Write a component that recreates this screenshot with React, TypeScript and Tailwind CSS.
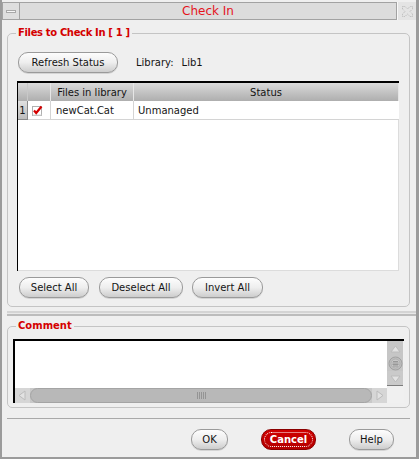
import React from "react";

const Btn: React.FC<{ w: string; children: React.ReactNode; className?: string }> = ({ w, children, className = "" }) => (
    <div
        className={`${w} h-[21px] shrink-0 rounded-[10px] border border-[#9a9a9a] bg-linear-to-b from-[#fdfdfd] via-[#eeeeee] to-[#cdcdcd] shadow-[0_1px_0_#d4d4d4] flex items-center justify-center text-[10px] text-[#141414] ${className}`}
    >
        {children}
    </div>
);

const Legend: React.FC<{ children: React.ReactNode; className?: string }> = ({ children, className = "" }) => (
    <legend className={`px-[2px] text-[10px] leading-[12px] font-bold text-[#d40000] ${className}`}>{children}</legend>
);

const Arrow: React.FC<{ dir: "up" | "down" | "left" | "right" }> = ({ dir }) => {
    const pts = {
        up: "3,11 7.5,5 12,11",
        down: "3,5 7.5,11 12,5",
        left: "10,3 4,7.5 10,12",
        right: "5,3 11,7.5 5,12",
    }[dir];
    return (
        <svg width="15" height="15" viewBox="0 0 15 15">
            <polygon points={pts} fill="#e2e2e2" stroke="#bcbcbc" strokeWidth="1" />
        </svg>
    );
};

export default function App() {
    return (
        <div className="w-[419px] h-[459px] bg-[#efefef] border-l-2 border-r-[3px] border-b-2 border-[#9b9b9b] pt-[2px] flex flex-col font-['DejaVu_Sans',sans-serif] text-[10px] text-[#141414] overflow-hidden">
            {/* title bar */}
            <div className="flex h-[18px] shrink-0">
                <div className="w-[18px] border border-[#a2a2a2] bg-[#dedede] flex items-center justify-center">
                    <div className="w-[10px] h-[3px] border border-[#a8a8a8] bg-[#f6f6f6]" />
                </div>
                <div className="flex-1 border-y border-r border-[#a2a2a2] bg-[#dcdcdc] flex items-center justify-center text-[12px] text-[#e4141c]">
                    Check In
                </div>
                <div className="w-[19px] border-l border-[#f8f8f8] bg-[#e4e4e4] flex items-center justify-center">
                    <svg width="13" height="13" viewBox="0 0 13 13">
                        <path
                            d="M1.5 1.5 L4 1.5 L6.5 4 L9 1.5 L11.5 1.5 L11.5 4 L9 6.5 L11.5 9 L11.5 11.5 L9 11.5 L6.5 9 L4 11.5 L1.5 11.5 L1.5 9 L4 6.5 L1.5 4 Z"
                            fill="none"
                            stroke="#b4b4b4"
                            strokeWidth="1"
                            strokeDasharray="1 1"
                        />
                    </svg>
                </div>
            </div>

            <div className="flex flex-col pl-[5px] pr-[6px]">
                {/* files group */}
                <fieldset className="mt-[7px] border border-[#c4c4c4] rounded-[5px] pl-[9px] pr-[10px] pt-[13px] pb-[8px]">
                    <Legend className="ml-[-1px] tracking-[-0.35px]">Files to Check In [ 1 ]</Legend>
                    <div className="flex items-center">
                        <Btn w="w-[100px] ml-[1px]">Refresh Status</Btn>
                        <span className="ml-[18px]">Library:</span>
                        <span className="ml-[8px]">Lib1</span>
                    </div>

                    <div className="mt-[8px] w-[382px] h-[190px] bg-white border-t-2 border-l border-black flex flex-col">
                        <div className="flex h-[18px] bg-linear-to-b from-[#dadada] to-[#aeaeae]">
                            <div className="w-[10px] border-r border-[#c8c8c8]" />
                            <div className="w-[23px] border-r border-[#e6e6e6]" />
                            <div className="w-[83px] border-r border-[#e6e6e6] flex items-center justify-center">Files in library</div>
                            <div className="flex-1 border-r border-[#e6e6e6] flex items-center justify-center">Status</div>
                        </div>
                        <div className="flex h-[19px]">
                            <div className="w-[10px] bg-linear-to-b from-[#e0e0e0] to-[#bdbdbd] border-r border-b border-[#8a8a8a] flex items-center justify-center">
                                1
                            </div>
                            <div className="w-[23px] border-r border-b border-[#d4d4d4] flex items-center pl-[3px]">
                                <svg width="12" height="12" viewBox="0 0 12 12">
                                    <rect x="1.5" y="2.5" width="9" height="9" fill="#ffffff" stroke="#b0b0b0" />
                                    <line x1="2" y1="11" x2="10.5" y2="11" stroke="#d8d8d8" />
                                    <path d="M3 6.5 L5.2 9 L10.5 2.5" fill="none" stroke="#d40000" strokeWidth="2.2" />
                                </svg>
                            </div>
                            <div className="w-[83px] border-r border-b border-[#d4d4d4] flex items-center pl-[5px]">newCat.Cat</div>
                            <div className="flex-1 border-b border-[#d4d4d4] flex items-center pl-[4px]">Unmanaged</div>
                        </div>
                        <div className="flex-1 border-r border-b border-[#dcdcdc]" />
                    </div>

                    <div className="mt-[6px] ml-[2px] flex">
                        <Btn w="w-[70px]">Select All</Btn>
                        <Btn w="w-[84px] ml-[10px]">Deselect All</Btn>
                        <Btn w="w-[71px] ml-[9px]">Invert All</Btn>
                    </div>
                </fieldset>

                {/* splitter */}
                <div className="mt-[4px] mr-[-6px] h-[5px] border-t-2 border-b-2 border-t-[#d4d4d4] border-b-[#bcbcbc] bg-[#e8e8e8]" />

                {/* comment group */}
                <fieldset className="mt-[4px] border border-[#c4c4c4] rounded-[5px] pl-[5px] pr-[5px] pt-[7px] pb-[4px]">
                    <Legend className="ml-[3px]">Comment</Legend>
                    <div className="h-[64px] border-t-2 border-l-2 border-black bg-[#f0f0f0] flex flex-col">
                        <div className="flex h-[47px]">
                            <div className="flex-1 bg-white" />
                            <div className="w-[16px] flex flex-col">
                                <div className="h-[15px] bg-[#c6c6c6] flex items-center justify-center">
                                    <Arrow dir="up" />
                                </div>
                                <div className="h-[15px] bg-[#c6c6c6] flex items-center justify-center">
                                    <svg width="15" height="15" viewBox="0 0 15 15">
                                        <circle cx="7.5" cy="7.5" r="6.5" fill="#bdbdbd" stroke="#a2a2a2" />
                                        <circle cx="7.5" cy="7.5" r="4.5" fill="#c8c8c8" stroke="#b0b0b0" />
                                        <path d="M5 5.5 H10 M4.5 7 H10.5 M4.5 8.5 H10.5 M5 10 H10" stroke="#8c8c8c" strokeWidth="0.8" />
                                    </svg>
                                </div>
                                <div className="h-[15px] bg-[#cacaca] border-b border-[#7c7c7c] flex items-center justify-center">
                                    <Arrow dir="down" />
                                </div>
                            </div>
                            <div className="w-[1px]" />
                        </div>
                        <div className="flex h-[15px]">
                            <div className="w-[15px] bg-[#d6d6d6] flex items-center justify-center">
                                <Arrow dir="left" />
                            </div>
                            <div className="flex-1 bg-[#c8c8c8] flex">
                                <div className="flex-1 rounded-full bg-[#b8b8b8] border border-[#a4a4a4] flex items-center justify-center">
                                    <svg width="9" height="7" viewBox="0 0 9 7">
                                        <path d="M0.5 0 V7 M2.5 0 V7 M4.5 0 V7 M6.5 0 V7 M8.5 0 V7" stroke="#8a8a8a" strokeWidth="0.8" />
                                    </svg>
                                </div>
                            </div>
                            <div className="w-[15px] bg-[#d6d6d6] flex items-center justify-center">
                                <Arrow dir="right" />
                            </div>
                            <div className="w-[17px]" />
                        </div>
                    </div>
                </fieldset>

                {/* separator */}
                <div className="mt-[10px] h-[1px] bg-[#a9a9a9]" />

                {/* dialog buttons */}
                <div className="mt-[10px] flex justify-end pr-[16px] gap-[33px]">
                    <Btn w="w-[37px]">OK</Btn>
                    <div className="w-[55px] h-[21px] rounded-[10px] border border-[#8a0000] bg-linear-to-b from-[#d00000] to-[#b40000] p-[2px] flex">
                        <span className="flex-1 rounded-[8px] border border-dotted border-white flex items-center justify-center text-[10px] font-bold text-white">
                            Cancel
                        </span>
                    </div>
                    <Btn w="w-[45px]">Help</Btn>
                </div>
            </div>
        </div>
    );
}
